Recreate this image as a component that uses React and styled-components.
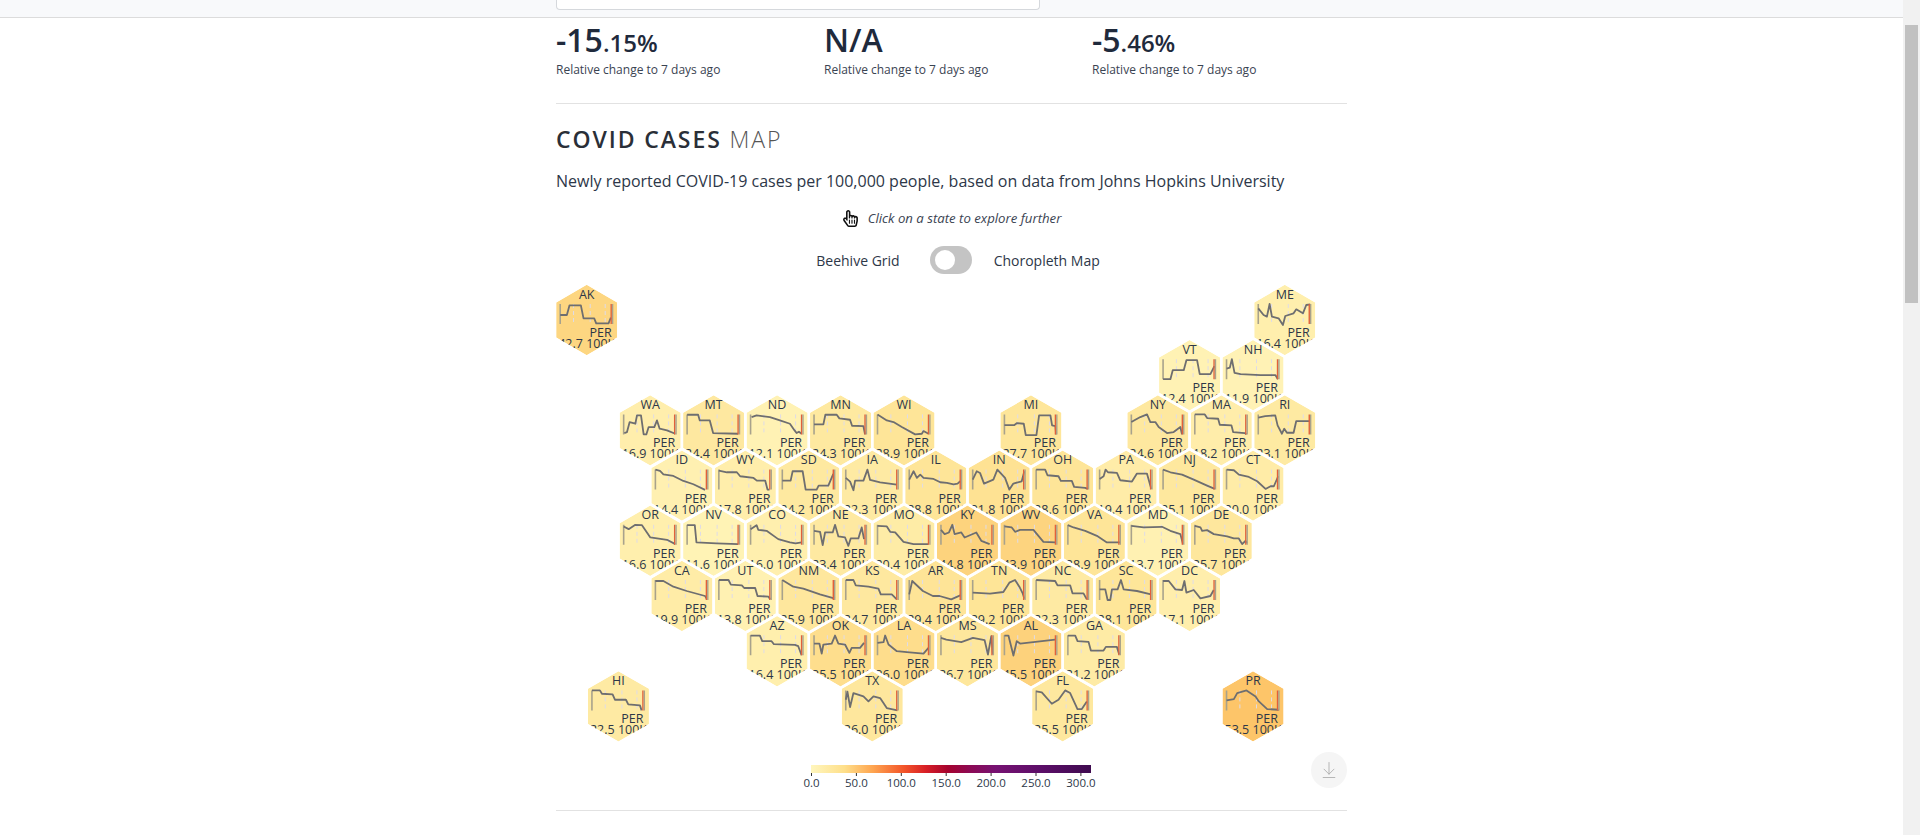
import React from "react";
import styled, { createGlobalStyle } from "styled-components";
import { FaRegHandPointer } from "react-icons/fa";
import { ArrowDownToLine } from "lucide-react";

const GlobalStyle = createGlobalStyle`
  html, body { margin: 0; padding: 0; height: 835px; overflow: hidden; background: #fff; }
  body { font-family: "Open Sans", "Liberation Sans", sans-serif; color: #2d3748; }
`;

const Page = styled.div`display: flex; height: 835px; overflow: hidden;`;
const Main = styled.div`flex: 1; min-width: 0;`;
const Scrollbar = styled.div`width: 17px; background: #f1f1f1; padding: 25px 2px 0 2px; box-sizing: border-box;`;
const Thumb = styled.div`height: 278px; background: #c1c1c1;`;
const TopBar = styled.header`
  height: 17px; background: #f8f9fb; border-bottom: 1px solid #dcdcdc;
  display: flex; justify-content: center;
`;
const TopInner = styled.div`width: 791px;`;
const SearchBox = styled.div`
  width: 484px; height: 10px; box-sizing: border-box; background: #fff;
  border: 1px solid #d5d8dc; border-top: 0; border-radius: 0 0 4px 4px;
`;
const Column = styled.main`width: 791px; margin: 0 auto;`;
const Stats = styled.section`
  display: grid; grid-template-columns: repeat(3, 268px);
  padding-top: 3px; height: 86px; box-sizing: border-box; border-bottom: 1px solid #e2e2e2;
`;
const Stat = styled.div`display: flex; flex-direction: column;`;
const StatValue = styled.div`
  font-size: 32px; font-weight: 600; line-height: 38px; height: 38px; color: #1f2a3c; white-space: nowrap;
`;
const StatDecimals = styled.span`font-size: 24px; line-height: 1;`;
const StatNote = styled.div`font-size: 12px; line-height: 16px; margin-top: 3px; color: #3a4352;`;
const Title = styled.h2`
  margin: 20px 0 0; font-size: 23px; line-height: 30px; font-weight: 600;
  letter-spacing: 1.9px; color: #2a2f38; text-transform: uppercase;
`;
const TitleLight = styled.span`font-weight: 300; color: #555;`;
const Lead = styled.p`margin: 16px 0 0; font-size: 16px; line-height: 22px; color: #2d3748;`;
const Hint = styled.div`
  margin-top: 16px; display: flex; justify-content: center; align-items: center; gap: 9px;
  height: 20px; font-size: 13.2px; font-style: italic; color: #3a4352;
  svg { color: #111; }
`;
const ToggleRow = styled.div`
  margin-top: 18px; padding-left: 13px; height: 28px; display: flex; justify-content: center; align-items: center;
  font-size: 14px; color: #2d3748;
`;
const Track = styled.div`
  width: 42px; height: 28px; border-radius: 14px; background: #c4c4c4; padding: 4px 5px;
  box-sizing: border-box; margin: 0 22px 0 30px;
`;
const Knob = styled.div`width: 20px; height: 20px; border-radius: 50%; background: #fff;`;
const MapSvg = styled.svg`display: block; margin-top: 6px; width: 791px; height: 470px;`;
const StateName = styled.text`font-size: 12.5px; fill: #2d3748; text-anchor: middle;`;
const PerLabel = styled.text`font-size: 12.5px; fill: #2d3748; text-anchor: end;`;
const ValueLabel = styled.text`font-size: 12.5px; fill: #2d3748; text-anchor: middle;`;
const Footer = styled.div`
  display: grid; grid-template-columns: 1fr auto 1fr; align-items: start;
  height: 61px; box-sizing: border-box; border-bottom: 1px solid #e2e2e2;
`;
const LegendSvg = styled.svg`display: block; grid-column: 2; margin: 15px 1px 0 0; width: 300px; height: 36px;`;
const LegendTick = styled.text`font-size: 11.5px; fill: #2d3748; text-anchor: middle;`;
const Download = styled.button`
  grid-column: 3; justify-self: end; margin-top: 2px; width: 36px; height: 36px; padding: 0;
  border: 0; border-radius: 50%; background: #f5f5f5; color: #a8a8a8;
  display: flex; align-items: center; justify-content: center;
`;

const STATES = [
  ["AK",0,0,42.7,"0,33 20,33 28,4 62,4 70,43 102,43 108,58 145,58 152,41"],
  ["ME",22,0,16.4,"0,13 16,33 26,38 34,0 41,38 61,43 74,63 81,36 106,28 114,16 134,28 144,3 156,1"],
  ["VT",19,1,12.4,"0,60 22,60 29,33 62,33 70,3 102,3 110,45 142,45 154,21"],
  ["NH",21,1,11.9,"0,28 10,25 16,0 24,41 42,45 102,48 147,48 154,60"],
  ["WA",2,2,16.9,"2,56 10,53 18,23 35,28 40,3 52,3 60,60 68,60 75,38 92,38 100,18 108,43 130,48 155,58"],
  ["MT",4,2,24.4,"0,1 33,1 38,18 68,18 78,56 153,58"],
  ["ND",6,2,12.1,"3,8 18,3 58,8 88,18 118,28 132,48 138,56 145,52 153,58"],
  ["MN",8,2,24.3,"0,30 28,30 34,1 68,1 76,12 108,16 114,34 148,35 153,60"],
  ["WI",10,2,28.9,"0,0 28,18 48,23 73,38 113,60 133,58 138,50 153,58"],
  ["MI",14,2,27.7,"0,32 30,32 38,26 58,28 64,62 96,62 104,3 138,3 143,33 153,35 155,60"],
  ["NY",18,2,24.6,"0,23 12,16 27,8 47,0 57,23 72,23 82,38 107,56 127,53 147,38 152,60"],
  ["MA",20,2,18.2,"0,0 30,0 37,11 70,13 75,31 110,33 115,53 150,56 155,60"],
  ["RI",22,2,23.1,"0,10 21,5 51,3 58,33 71,58 78,43 86,55 106,55 114,20 156,20"],
  ["ID",3,3,14.4,"0,0 14,4 24,14 54,19 84,34 114,44 149,61"],
  ["WY",5,3,17.8,"0,3 24,8 54,8 64,20 104,25 114,33 139,33 146,60 152,60"],
  ["SD",7,3,24.2,"0,33 25,33 31,5 61,5 70,60 103,60 109,48 138,48 153,13"],
  ["IA",9,3,22.3,"0,25 13,36 23,62 28,33 53,33 65,0 73,31 103,38 153,45"],
  ["IL",11,3,28.8,"0,30 13,5 23,25 33,15 43,25 73,28 93,38 113,40 133,44 145,42 153,35"],
  ["IN",13,3,31.8,"0,30 12,5 22,10 34,42 62,30 74,0 97,25 110,60 122,42 147,35 155,5"],
  ["OH",15,3,28.6,"0,0 27,0 34,17 67,20 74,34 107,34 114,52 147,55 155,58"],
  ["PA",17,3,19.4,"0,28 12,20 18,0 25,8 52,10 62,32 97,36 112,12 142,12 155,58"],
  ["NJ",19,3,25.1,"0,0 22,8 57,15 92,30 132,48 155,58"],
  ["CT",21,3,20.0,"0,0 22,2 37,15 67,22 92,35 117,58 132,50 142,50 155,20"],
  ["OR",2,4,16.6,"0,5 15,13 35,0 55,1 80,38 130,45 155,58"],
  ["NV",4,4,11.6,"0,1 23,1 28,53 88,56 153,58"],
  ["CO",6,4,16.0,"0,13 18,1 23,15 48,18 83,43 118,53 135,56 153,53"],
  ["NE",8,4,23.4,"0,18 18,21 26,61 33,23 56,23 63,0 73,35 93,38 103,63 110,41 133,41 143,8 150,43"],
  ["MO",10,4,20.4,"0,3 28,5 38,21 53,23 78,51 108,58 153,58"],
  ["KY",12,4,44.8,"0,15 11,28 24,23 34,0 41,28 61,23 71,38 106,23 121,48 146,58"],
  ["WV",14,4,43.9,"0,5 22,8 32,21 47,15 87,15 117,51 152,53"],
  ["VA",16,4,28.9,"0,1 17,8 52,18 87,33 117,53 157,53"],
  ["MD",18,4,13.7,"0,3 37,8 92,6 117,18 147,28 155,58"],
  ["DE",20,4,25.7,"0,3 17,8 22,18 37,16 57,28 97,35 117,41 132,41 142,58 152,48 157,55"],
  ["CA",3,5,19.9,"0,3 24,3 54,20 94,33 149,48 154,56"],
  ["UT",5,5,13.8,"0,0 29,0 36,14 69,16 76,24 109,24 116,48 149,50 154,58"],
  ["NM",7,5,25.9,"0,0 33,20 63,26 113,43 158,56"],
  ["KS",9,5,24.7,"0,0 23,0 30,16 68,20 98,26 105,43 138,43 153,58"],
  ["AR",11,5,29.4,"0,43 9,3 41,33 71,48 91,48 126,58 153,46"],
  ["TN",13,5,29.2,"0,38 52,41 92,36 110,8 127,0 140,20 150,40 155,56"],
  ["NC",15,5,22.3,"0,0 57,3 64,16 102,16 109,40 142,40 152,58"],
  ["SC",17,5,28.1,"0,28 17,28 24,60 32,60 37,28 54,28 64,0 72,28 112,33 154,43"],
  ["DC",19,5,17.1,"0,3 17,3 37,28 57,30 64,3 70,38 92,30 112,55 142,48 152,30"],
  ["AZ",6,6,16.4,"0,1 28,1 35,18 63,18 70,27 133,29 143,33 153,60"],
  ["OK",8,6,35.5,"0,25 16,25 23,55 28,28 53,25 63,1 73,25 93,28 106,53 113,38 138,38 150,23"],
  ["LA",10,6,36.0,"0,23 18,21 23,1 33,28 58,48 88,51 138,55 153,38"],
  ["MS",12,6,26.7,"0,8 16,13 61,21 96,8 131,15 141,58 151,3 156,58"],
  ["AL",14,6,45.5,"0,1 12,1 27,61 37,18 47,25 152,13"],
  ["GA",16,6,21.2,"0,1 22,1 29,18 62,20 69,46 107,46 114,35 147,35 154,58"],
  ["HI",1,7,22.5,"0,0 24,0 30,10 62,12 69,28 102,28 109,42 144,45 149,60"],
  ["TX",9,7,26.0,"0,28 5,4 13,50 23,8 53,18 68,33 83,18 103,23 123,53 155,60"],
  ["FL",15,7,25.5,"0,3 17,6 47,40 67,28 87,0 102,8 124,56 137,56 152,33"],
  ["PR",21,7,53.5,"0,30 22,26 32,8 60,0 87,18 97,33 122,56 157,58"],
];

const STOPS = [[10,[255,244,184]],[30,[254,228,150]],[45,[253,211,125]],[55,[253,194,102]]];
function fillFor(v) {
  for (let i = 1; i < STOPS.length; i++) {
    if (v <= STOPS[i][0]) {
      const [a, ca] = STOPS[i - 1];
      const [b, cb] = STOPS[i];
      const t = (v - a) / (b - a);
      return `rgb(${ca.map((c, k) => Math.round(c + (cb[k] - c) * t)).join(",")})`;
    }
  }
  return "rgb(253,194,102)";
}

const HEX = "0,-35.2 30.5,-17.6 30.5,17.6 0,35.2 -30.5,17.6 -30.5,-17.6";
const DASHES = [40, 90, 135];

function Spark({ points }) {
  const scaled = points.split(" ").map((p) => p.split(",").map((n) => +n / 3).join(",")).join(" ");
  return (
    <g transform="translate(-26.5,-16)">
      {DASHES.map((d) => (
        <line key={d} x1={d / 3} x2={d / 3} y1="0" y2="20" stroke="#dedbe8" strokeWidth="1" strokeDasharray="4 3" />
      ))}
      <line x1="0" x2="0" y1="0" y2="20" stroke="#a8a28c" strokeWidth="1.6" />
      <polyline points={scaled} fill="none" stroke="#6e6e70" strokeWidth="1.8" strokeLinejoin="round" />
      <line x1="51" x2="51" y1="0" y2="20" stroke="#e2603a" strokeWidth="1.4" />
      <line x1="52.4" x2="52.4" y1="0" y2="20" stroke="#a8a28c" strokeWidth="1.4" />
    </g>
  );
}

function Hexagon({ name, col, row, value, points }) {
  const x = 30.7 + col * 31.73;
  const y = 40 + row * 55.2;
  return (
    <g transform={`translate(${x},${y})`} clipPath="url(#hex-clip)">
      <polygon points={HEX} fill={fillFor(value)} />
      <StateName y="-21.5">{name}</StateName>
      <Spark points={points} />
      <PerLabel x="25" y="17">PER</PerLabel>
      <ValueLabel y="28">{value.toFixed(1)} 100K</ValueLabel>
    </g>
  );
}

const TICKS = [0, 50, 100, 150, 200, 250, 300];
const LEGEND_STOPS = [
  [0, "#fff6bd"], [0.12, "#fedf8a"], [0.22, "#fea550"], [0.33, "#f3562a"], [0.41, "#d81f26"],
  [0.49, "#a5032f"], [0.57, "#8c0a55"], [0.66, "#761272"], [0.82, "#5c0e68"], [1, "#3f0b50"],
];

function Legend() {
  return (
    <LegendSvg viewBox="0 0 300 36">
      <defs>
        <linearGradient id="legend-ramp">
          {LEGEND_STOPS.map(([o, c]) => <stop key={o} offset={o} stopColor={c} />)}
        </linearGradient>
      </defs>
      <rect x="10" y="0" width="280" height="8" fill="url(#legend-ramp)" />
      {TICKS.map((t, i) => {
        const x = 10.5 + i * 44.9;
        return (
          <g key={t}>
            <line x1={x} x2={x} y1="8" y2="11" stroke="#333" />
            <LegendTick x={x} y="22">{t.toFixed(1)}</LegendTick>
          </g>
        );
      })}
    </LegendSvg>
  );
}

function StatBlock({ whole, decimals }) {
  return (
    <Stat>
      <StatValue>{whole}{decimals && <StatDecimals>{decimals}</StatDecimals>}</StatValue>
      <StatNote>Relative change to 7 days ago</StatNote>
    </Stat>
  );
}

export default function App() {
  return (
    <Page>
      <GlobalStyle />
      <Main>
        <TopBar><TopInner><SearchBox /></TopInner></TopBar>
        <Column>
          <Stats>
            <StatBlock whole="-15" decimals=".15%" />
            <StatBlock whole="N/A" />
            <StatBlock whole="-5" decimals=".46%" />
          </Stats>
          <Title>COVID Cases <TitleLight>Map</TitleLight></Title>
          <Lead>Newly reported COVID-19 cases per 100,000 people, based on data from Johns Hopkins University</Lead>
          <Hint><FaRegHandPointer size={17} /><span>Click on a state to explore further</span></Hint>
          <ToggleRow>
            <span>Beehive Grid</span>
            <Track><Knob /></Track>
            <span>Choropleth Map</span>
          </ToggleRow>
          <MapSvg viewBox="0 0 791 470">
            <defs><clipPath id="hex-clip"><polygon points={HEX} /></clipPath></defs>
            {STATES.map(([name, col, row, value, points]) => (
              <Hexagon key={name} name={name} col={col} row={row} value={value} points={points} />
            ))}
          </MapSvg>
          <Footer>
            <Legend />
            <Download aria-label="Download"><ArrowDownToLine size={20} strokeWidth={1} /></Download>
          </Footer>
        </Column>
      </Main>
      <Scrollbar><Thumb /></Scrollbar>
    </Page>
  );
}
